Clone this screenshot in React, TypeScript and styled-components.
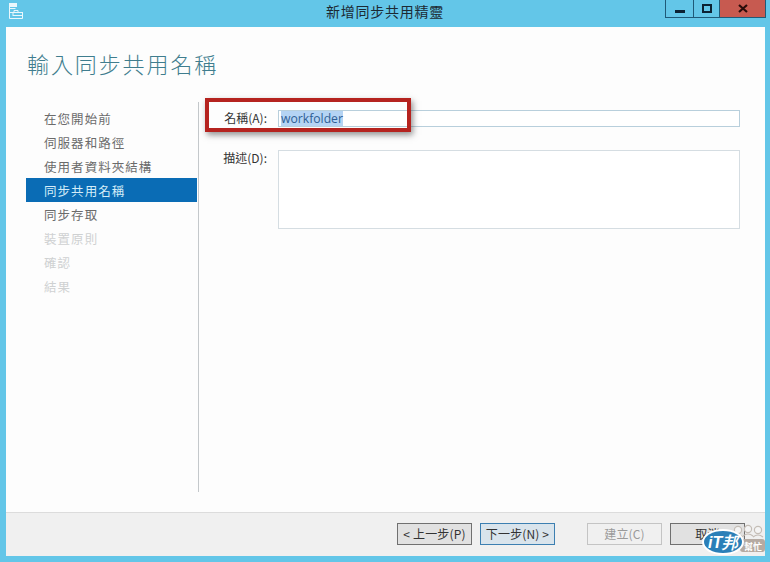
import React from "react";
import styled, { createGlobalStyle } from "styled-components";

const Global = createGlobalStyle`
  html, body { margin: 0; padding: 0; background: #63c6e8; }
  * { box-sizing: border-box; }
`;
const cjk = `"Noto Sans CJK TC", "Noto Sans CJK SC", sans-serif`;
const Win = styled.div`
  position: relative; width: 770px; height: 562px; overflow: hidden;
  background: #63c6e8; display: flex; flex-direction: column;
  font-family: "Open Sans", ${cjk};
`;
const TitleBar = styled.div`
  height: 27px; flex: none; display: flex; align-items: flex-start; position: relative;
  padding-left: 8px;
`;
const AppIcon = styled.svg`width: 16px; height: 16px; margin-top: 3px; flex: none;`;
const Title = styled.div`
  position: absolute; left: 0; right: 0; top: 2px; text-align: center;
  font: 14px/18px ${cjk}; color: #1c2a33; letter-spacing: .75px;
`;
const Controls = styled.div`margin-left: auto; margin-right: 4px; display: flex; height: 18px;`;
const Ctl = styled.div<{ $w: number; $red?: boolean }>`
  width: ${p => p.$w}px; height: 18px; display: flex; align-items: center; justify-content: center;
  background: ${p => (p.$red ? "#c75a50" : "transparent")};
  border: 1px solid #1f5a78; border-top: 0; margin-left: -1px;
`;
const Client = styled.div`
  flex: 1; margin: 0 5px 6px 6px; background: #fdfdfd; display: flex; flex-direction: column; min-height: 0;
`;
const Heading = styled.h1`
  margin: 0; padding: 17px 0 0 21px; height: 75px; flex: none;
  font: 300 22px/38px ${cjk}; color: #3f7d8e; letter-spacing: 1.9px;
`;
const Body = styled.div`flex: 1; display: flex; min-height: 0; padding-bottom: 20px;`;
const Side = styled.nav`
  width: 193px; flex: none; padding: 4px 0 0 20px; border-right: 1px solid #c4c8cb; display: flex; flex-direction: column;
`;
const Step = styled.div<{ $state: "on" | "off" | "active" }>`
  height: 24px; padding-left: 18px; width: 171px; font: 12.5px/25px ${cjk}; letter-spacing: 1.05px;
  color: ${p => (p.$state === "active" ? "#d4ecf8" : p.$state === "off" ? "#cfd1d2" : "#6b6b6b")};
  background: ${p => (p.$state === "active" ? "#0a6cb5" : "transparent")};
`;
const Form = styled.div`
  flex: 1; padding: 8px 25px 0 0; display: grid; grid-template-columns: 68px 1fr;
  column-gap: 11px; row-gap: 23px; align-content: start;
`;
const Label = styled.div`
  text-align: right; font: 12px/15px ${cjk}; color: #333; white-space: nowrap;
`;
const Input = styled.div`
  height: 17px; border: 1px solid #b8cfdc; background: #fff; padding-left: 2px;
  font: 12.2px/15px "Open Sans", sans-serif; color: #2f5f95;
`;
const Sel = styled.span`background: #b5d4f4; display: inline-block; height: 15px;`;
const TextArea = styled.div`height: 79px; border: 1px solid #d5dde2; background: #fff;`;
const Footer = styled.div`
  height: 44px; flex: none; background: #f0f0f0; border-top: 1px solid #dcdcdc;
  display: flex; align-items: flex-start; padding: 10px 20px 0 391px;
`;
const Btn = styled.div<{ $v?: "focus" | "off"; $ml?: number }>`
  width: 75px; height: 22px; margin-left: ${p => p.$ml ?? 0}px;
  text-align: center; font: 12px/20px ${cjk}; letter-spacing: .15px;
  color: ${p => (p.$v === "off" ? "#9a9a9a" : "#333")};
  background: ${p => (p.$v === "off" ? "#f0f0f0" : p.$v === "focus" ? "#d9e4ec" : "#e1e1e1")};
  border: 1px solid ${p => (p.$v === "focus" ? "#3c7fb1" : p.$v === "off" ? "#c4c4c4" : "#707070")};
`;
const RedBox = styled.div`
  position: absolute; left: 205px; top: 98px; width: 206px; height: 34px;
  border: 4px solid #b5231f; box-shadow: 2px 3px 6px rgba(60,60,60,.55);
  pointer-events: none;
`;
const Mark = styled.svg`position: absolute; left: 700px; top: 524px; width: 70px; height: 36px;`;
const MarkIT = styled.text`font: italic 700 16px "Liberation Sans", sans-serif; fill: #fff;`;
const MarkCN = styled.text`font: 700 9px ${cjk}; fill: #fff;`;

const steps: [string, "on" | "off" | "active"][] = [
  ["在您開始前", "on"], ["伺服器和路徑", "on"], ["使用者資料夾結構", "on"], ["同步共用名稱", "active"],
  ["同步存取", "on"], ["裝置原則", "off"], ["確認", "off"], ["結果", "off"],
];

export default function App() {
  return (
    <Win>
      <Global />
      <TitleBar>
        <AppIcon viewBox="0 0 16 16" fill="none" stroke="#eaf7fc" strokeWidth="1">
          <rect x="1.5" y="0.5" width="7" height="3" fill="#eaf7fc" />
          <path d="M1.5 5.5h6M1.5 3.5v12h13v-6h-13" />
          <path d="M6 9.5v-2h4v2" />
          <rect x="5" y="9.5" width="9.5" height="3" />
        </AppIcon>
        <Title>新增同步共用精靈</Title>
        <Controls>
          <Ctl $w={29}>
            <svg width="10" height="10" viewBox="0 0 10 10"><rect y="6" width="10" height="3" fill="#0c2233" /></svg>
          </Ctl>
          <Ctl $w={27}>
            <svg width="10" height="10" viewBox="0 0 10 10"><rect x="1" y="1" width="8" height="7" fill="none" stroke="#0c2233" strokeWidth="2" /></svg>
          </Ctl>
          <Ctl $w={47} $red>
            <svg width="10" height="9" viewBox="0 0 10 9"><path d="M1 1l8 7M9 1l-8 7" stroke="#2a0c0a" strokeWidth="2.2" /></svg>
          </Ctl>
        </Controls>
      </TitleBar>
      <Client>
        <Heading>輸入同步共用名稱</Heading>
        <Body>
          <Side>
            {steps.map(([s, st]) => <Step key={s} $state={st}>{s}</Step>)}
          </Side>
          <Form>
            <Label>名稱(A):</Label>
            <Input><Sel>workfolder</Sel></Input>
            <Label>描述(D):</Label>
            <TextArea />
          </Form>
        </Body>
        <Footer>
          <Btn>&lt; 上一步(P)</Btn>
          <Btn $v="focus" $ml={8}>下一步(N) &gt;</Btn>
          <Btn $v="off" $ml={32}>建立(C)</Btn>
          <Btn $ml={8}>取消</Btn>
        </Footer>
      </Client>
      <RedBox />
      <Mark viewBox="0 0 70 36">
        <g fill="#f4f4f4" stroke="#c4bdb6" strokeWidth="1.2">
          <circle cx="38" cy="6" r="3.6" /><circle cx="48" cy="5" r="3.6" /><circle cx="58" cy="6" r="3.6" />
          <path d="M33 13q5-4 10 0M43 12q5-4 10 0M53 13q5-4 10 0" fill="none" />
        </g>
        <rect x="40" y="15" width="25" height="13" rx="3" fill="#b5aaa2" />
        <MarkCN x="44" y="25.5">幫忙</MarkCN>
        <ellipse cx="23" cy="18" rx="21" ry="13" fill="#fff" />
        <ellipse cx="23" cy="18" rx="19" ry="11" fill="#2a7fb8" />
        <MarkIT x="8" y="24">iT邦</MarkIT>
      </Mark>
    </Win>
  );
}
